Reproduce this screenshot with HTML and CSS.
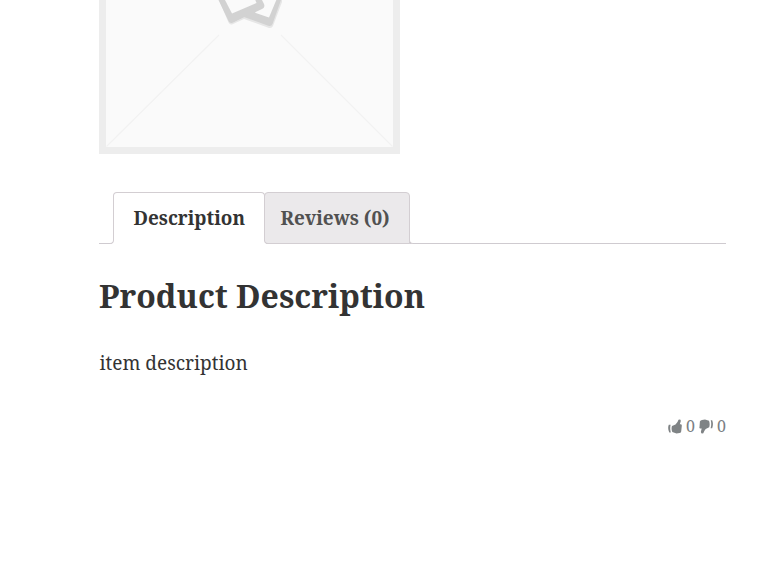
FILE: index.html
```html
<!DOCTYPE html>
<html lang="en">
<head>
<meta charset="utf-8">
<title>Product</title>
<link rel="stylesheet" href="styles.css">
</head>
<body>
<main class="product">
  <svg class="photo" viewBox="0 0 301 154" aria-hidden="true">
    <path fill="#ededed" d="M0 0h301v154H0z"/>
    <path fill="#fafafa" d="M7 0h287v147H7z"/>
    <path class="crease" d="M7.500 146.500L120 35M293.500 146.500L182 35"/>
    <path fill="#e6e6e6" d="M120 0L129.500 22.500Q131 25.500 134 24L145 19L170 28Q173 28.500 174 26L183 2V0z"/>
    <path fill="#d2d2d2" d="M119.500 0L129.500 21Q131 24 134 22.500L145 17L170 26Q172.500 26.500 173.500 24L182 0z"/>
    <path fill="#fafafa" d="M156 12.700L170 17.600L177.300 0H163z"/>
    <path fill="#d2d2d2" d="M125 0L134 22L162 9.500Q166.500 8 165 4L163 0z"/>
    <path fill="#fafafa" d="M126 0L133 13.400L157.500 3L156.300 0z"/>
  </svg>
  <ul class="tabs">
    <li class="tab active"><a>Description</a></li>
    <li class="tab"><a>Reviews (0)</a></li>
  </ul>
  <h2>Product Description</h2>
  <p class="text">item description</p>
  <div class="votes">
    <svg class="up" viewBox="0 0 14 15"><path d="M.8 5.800H2.600Q1.700 9.500 2.800 13.500H1.300Q-.7 9.500 .8 5.800zM4 7L7.500 5.400Q10 3 10.500 .8Q13.200 0 12.700 2.500L11.800 5.200H13Q14 5.500 13.800 7L13.200 12.500Q12.800 14 11.500 14L8.500 14.500L4.300 13Q3 10 4 7z"/></svg>
    <span>0</span>
    <svg class="down" viewBox="0 0 14 15"><path d="M11.700 1.200H13.200Q14.700 5 13.200 9.200H11.600Q12.800 5 11.700 1.200zM10 1.800Q11.200 5 10.200 8.200L6.700 10Q5 12 4.300 14.300Q1.600 15 2 12.300L2.700 9.600H1Q0 9 .5 8L.9 2.500Q1.500 1 3 1L6 .5z"/></svg>
    <span>0</span>
  </div>
</main>
</body>
</html>
```
FILE: styles.css
```css
body {
  margin: 0;
  background: #fff;
  color: #333;
  font-family: "Noto Serif", "Droid Serif", "DejaVu Serif Condensed", "DejaVu Serif", serif;
}
.product {
  width: 627px;
  margin-left: 99px;
}
.photo {
  display: block;
  width: 301px;
  height: 154px;
}
.crease {
  fill: none;
  stroke: #f2f2f2;
  stroke-width: 1.2;
}
.tabs {
  display: flex;
  list-style: none;
  margin: 38px 0 0;
  padding: 0 14px;
  height: 51px;
  border-bottom: 1px solid #cfcbd0;
}
.tab {
  position: relative;
  box-sizing: border-box;
  height: 52px;
  width: 146px;
  margin-left: -1px;
  padding-left: 15.5px;
  border: 1px solid #d3ced2;
  border-radius: 4px 4px 0 0;
  background: #ebe9eb;
  color: #515151;
  font-size: 18.9px;
  font-weight: 700;
  line-height: 51px;
  white-space: nowrap;
}
.tab.active {
  z-index: 1;
  width: 152px;
  margin-left: 0;
  padding-left: 19.5px;
  border-bottom-color: #fff;
  background: #fff;
  color: #333;
}
.tab.active::before,
.tab.active::after,
.tab:last-child::after {
  content: "";
  position: absolute;
  bottom: -1px;
  width: 3px;
  height: 4px;
  border: solid #d3ced2;
  background: #fff;
}
.tab.active::before {
  left: -4px;
  border-width: 0 1px 1px 0;
  border-bottom-right-radius: 4px;
  box-shadow: 2px 2px 0 #fff;
}
.tab.active::after,
.tab:last-child::after {
  right: -4px;
  border-width: 0 0 1px 1px;
  border-bottom-left-radius: 4px;
}
.tab.active::after {
  background: #ebe9eb;
  box-shadow: -2px 2px 0 #fff;
}
h2 {
  margin: 30px 0 0;
  font-size: 32px;
  line-height: 44px;
  white-space: nowrap;
}
.text {
  margin: 30px 0 0;
  padding-left: 0.5px;
  font-size: 19px;
  line-height: 30px;
}
.votes {
  display: flex;
  justify-content: flex-end;
  align-items: center;
  height: 24px;
  margin-top: 36px;
  color: #7b8084;
  font-size: 16px;
  line-height: 24px;
}
.votes svg {
  width: 14px;
  height: 15px;
  fill: #7f8385;
}
.votes span {
  width: 9px;
  margin-left: 4px;
}
.votes .down {
  margin-left: 4px;
}
```
